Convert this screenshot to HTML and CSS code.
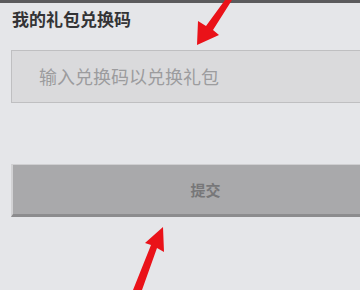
FILE: index.html
```html
<!DOCTYPE html>
<html lang="zh">
<head>
<meta charset="utf-8">
<link rel="stylesheet" href="styles.css">
</head>
<body>
<div class="topbar"></div>
<main class="panel">
  <h1 class="title">我的礼包兑换码</h1>
  <div class="input">输入兑换码以兑换礼包</div>
  <div class="button">提交</div>
</main>
<svg class="arrows" width="360" height="290" viewBox="0 0 360 290">
  <polygon points="225,0 232,0 213,30 219,35 197,45 198,21 206,26" fill="#ea1219"/>
  <polygon points="163,227 164,252 157,248 142,290 133,290 151,245 145,243" fill="#ea1219"/>
</svg>
</body>
</html>
```
FILE: styles.css
```css
html, body {
  margin: 0;
  padding: 0;
}
body {
  width: 360px;
  height: 290px;
  overflow: hidden;
  position: relative;
  background: #e5e6e9;
  font-family: "Noto Sans CJK SC", "Noto Sans", sans-serif;
}
.topbar {
  height: 3px;
  background: #5b5b5d;
}
.panel {
  padding: 6px 0 0 11px;
}
.title {
  margin: 0 0 0 1px;
  font-size: 17px;
  line-height: 20px;
  font-weight: bold;
  color: #333335;
}
.input {
  margin-top: 21px;
  height: 51px;
  border: 1px solid #bfbfc1;
  border-right: none;
  background: #dadadc;
  color: #9c9c9e;
  font-size: 18px;
  line-height: 51px;
  padding-left: 27px;
}
.button {
  margin-top: 61px;
  height: 49px;
  border-top: 1px solid #cfcfd1;
  border-left: 2px solid #d2d2d4;
  border-bottom: 3px solid #8c8c8e;
  background: #a9a9ab;
  color: #777779;
  font-size: 15px;
  font-weight: bold;
  line-height: 49px;
  text-align: center;
  text-indent: 38px;
}
.arrows {
  position: absolute;
  left: 0;
  top: 0;
}
```
